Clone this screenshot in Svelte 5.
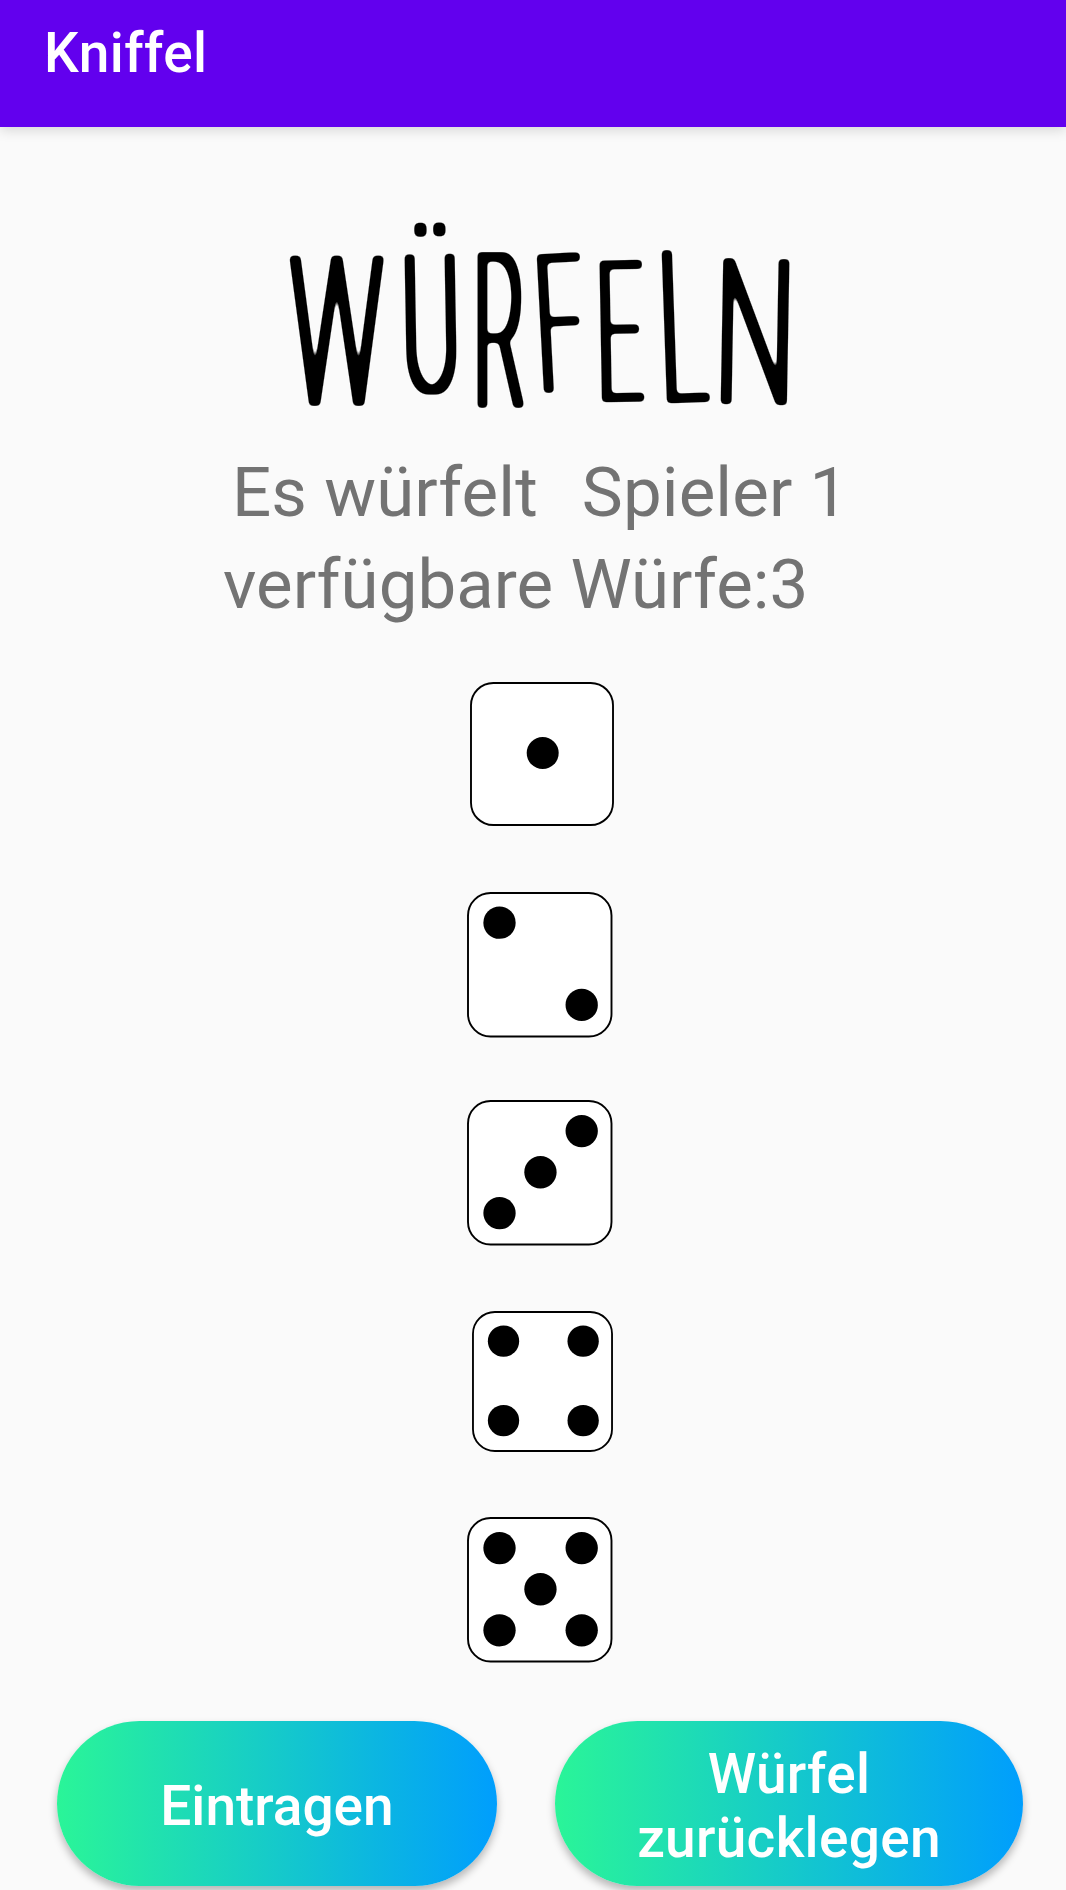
<script>
  // Lettering of the heading: left edge, baseline, horizontal / vertical scale and tilt per letter
  const letters = [
    { ch: 'W', x: 290.5, y: 403.5, sx: 0.51, sy: 1.03, tilt: 0 },
    { ch: 'Ü', x: 403, y: 391.5, sx: 0.435, sy: 0.95, tilt: -1 },
    { ch: 'R', x: 474, y: 406, sx: 0.39, sy: 1.07, tilt: 0 },
    { ch: 'F', x: 540, y: 391.5, sx: 0.4, sy: 0.95, tilt: -3 },
    { ch: 'E', x: 598, y: 400.5, sx: 0.4, sy: 0.97, tilt: -1 },
    { ch: 'L', x: 662, y: 401.5, sx: 0.45, sy: 1.05, tilt: -2 },
    { ch: 'N', x: 713.5, y: 402, sx: 0.57, sy: 1, tilt: 1 }
  ];

  const lo = 32.4;
  const mid = 73.2;
  const hi = 114.3;
  const dice = [
    { value: 1, pips: [[mid, 71.5]] },
    { value: 2, pips: [[lo, 30.6], [hi, 112.5]] },
    { value: 3, pips: [[hi, 31], [mid, 72], [lo, 112.7]] },
    { value: 4, pips: [[lo, 31], [hi, 31], [lo, 112.7], [hi, 112.7]] },
    { value: 5, pips: [[lo, 31], [hi, 31], [mid, 72], [lo, 112.9], [hi, 112.9]] }
  ];
</script>

<div class="screen">
  <header>Kniffel</header>

  <main>
    <h1 aria-label="WÜRFELN">
      <svg width="560" height="280" viewBox="260 180 560 280">
        <!-- Thickens the thin stems and rounds their ends like a marker pen -->
        <filter id="marker" filterUnits="userSpaceOnUse" x="260" y="180" width="560" height="280">
          <feMorphology operator="dilate" radius="4 2" />
          <feGaussianBlur stdDeviation="2" />
          <feComponentTransfer>
            <feFuncA type="linear" slope="5" intercept="-2.1" />
          </feComponentTransfer>
        </filter>
        <g filter="url(#marker)">
          {#each letters as l}<text transform="translate({l.x} {l.y}) rotate({l.tilt}) scale({l.sx} {l.sy})">{l.ch}</text>{/each}
        </g>
      </svg>
    </h1>

    <p class="turn"><span>Es würfelt</span><span>Spieler 1</span></p>
    <p class="left">verfügbare Würfe:3</p>

    <div class="dice">
      {#each dice as die}
        <svg class="die die-{die.value}" viewBox="0 0 145 145">
          <rect x="1" y="1" width="143" height="143" rx="22.5" />
          {#each die.pips as [cx, cy]}
            <circle {cx} {cy} r="16.1" />
          {/each}
        </svg>
      {/each}
    </div>

    <div class="actions">
      <button class="enter">Eintragen</button>
      <button class="back">Würfel<br />zurücklegen</button>
    </div>
  </main>
</div>

<style>
  :global(body) {
    background: #fafafa;
  }

  .screen {
    box-sizing: border-box;
    width: 1066px;
    height: 1890px;
    overflow: hidden;
    background: #fafafa;
    font-family: Roboto, 'Liberation Sans', sans-serif;
  }

  header {
    box-sizing: border-box;
    height: 127px;
    padding: 21px 0 0 44px;
    background: #6200ee;
    box-shadow: 0 3px 12px rgba(0, 0, 0, 0.15);
    color: #fff;
    font-size: 55px;
    font-weight: 500;
    line-height: 64px;
    letter-spacing: 0.4px;
  }

  main {
    display: flex;
    flex-direction: column;
  }

  h1 {
    height: 280px;
    margin: 53px 0 0 260px;
  }

  h1 svg {
    display: block;
  }

  h1 text {
    fill: #000;
    font-size: 200px;
    font-weight: 100;
  }

  p {
    margin: 0;
    color: #737373;
    font-size: 69px;
    line-height: 92px;
    white-space: nowrap;
  }

  .turn {
    display: flex;
    gap: 44px;
    margin-top: -13px;
    padding-left: 232px;
    letter-spacing: 0.1px;
  }

  .left {
    padding-left: 223px;
    letter-spacing: 0.04px;
  }

  .dice {
    display: flex;
    flex-direction: column;
    margin: 51px 0 0 467px;
  }

  .die {
    display: block;
    width: 145.5px;
    height: 145.5px;
  }

  .die rect {
    fill: #fff;
    stroke: #000;
    stroke-width: 1.9;
  }

  .die-1 {
    width: 144px;
    height: 144px;
    margin-left: 3px;
  }

  .die-2 {
    margin-top: 66px;
  }

  .die-3 {
    margin-top: 62.5px;
  }

  .die-4 {
    width: 141px;
    height: 141px;
    margin: 65.5px 0 0 4.5px;
  }

  .die-5 {
    margin-top: 65px;
  }

  .actions {
    display: flex;
    gap: 58px;
    margin: 58.5px 0 0 57px;
  }

  button {
    height: 165px;
    padding: 4px 0 0;
    border: 0;
    border-radius: 83px;
    background: linear-gradient(90deg, #2af598, #009efd);
    box-shadow: 0 5px 9px rgba(0, 0, 0, 0.28);
    color: #fff;
    font: 500 55px/64px Roboto, 'Liberation Sans', sans-serif;
  }

  .enter {
    width: 440px;
  }

  .back {
    width: 468px;
    letter-spacing: 0.3px;
  }
</style>
